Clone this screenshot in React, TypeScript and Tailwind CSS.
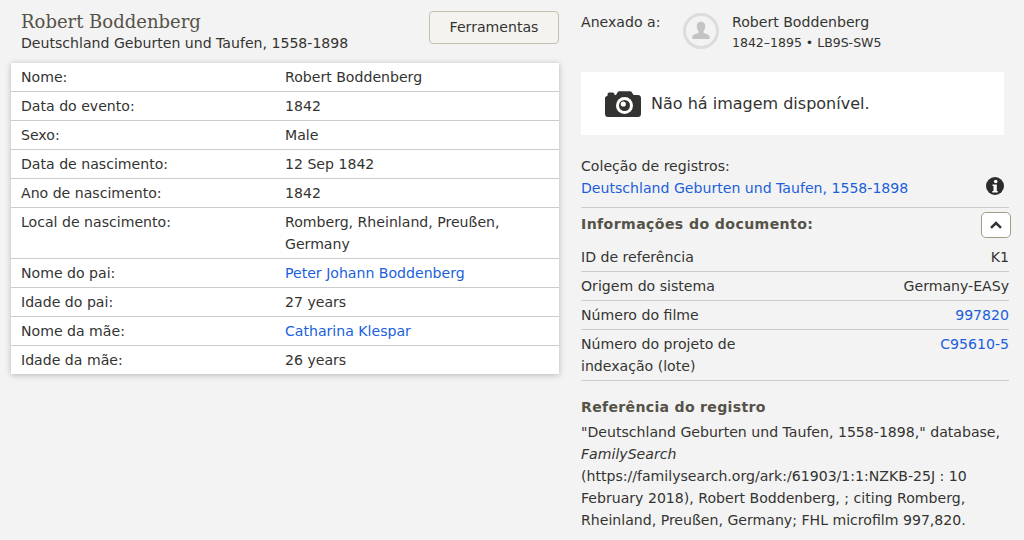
import React from "react";

const rows: [string, string, boolean?][] = [
  ["Nome:", "Robert Boddenberg"],
  ["Data do evento:", "1842"],
  ["Sexo:", "Male"],
  ["Data de nascimento:", "12 Sep 1842"],
  ["Ano de nascimento:", "1842"],
  ["Local de nascimento:", "Romberg, Rheinland, Preußen, Germany"],
  ["Nome do pai:", "Peter Johann Boddenberg", true],
  ["Idade do pai:", "27 years"],
  ["Nome da mãe:", "Catharina Klespar", true],
  ["Idade da mãe:", "26 years"],
];

const docs: [string, string, boolean?][] = [
  ["ID de referência", "K1"],
  ["Origem do sistema", "Germany-EASy"],
  ["Número do filme", "997820", true],
  ["Número do projeto de indexação (lote)", "C95610-5", true],
];

export default function App() {
  return (
    <div className="h-[540px] w-[1024px] overflow-hidden bg-[#f3f3f3] font-['DejaVu_Sans',sans-serif] text-[14.1px] leading-[22px] text-[#333331] flex">
      <div className="w-[548px] ml-[11px] shrink-0">
        <div className="flex justify-between items-start pt-[11px] pl-[10px] h-[63px]">
          <div>
            <div className="font-['DejaVu_Serif',serif] text-[18px] leading-[22px] text-[#555248]">Robert Boddenberg</div>
            <div className="leading-[20px]">Deutschland Geburten und Taufen, 1558-1898</div>
          </div>
          <button className="w-[130px] h-[33px] pb-[2px] rounded-[4px] border border-[#c4bfae] bg-[#f4f3ef] text-[#333331]">Ferramentas</button>
        </div>
        <div className="bg-white shadow-[0_1px_6px_rgba(0,0,0,0.25)]">
          {rows.map(([k, v, link]) => (
            <div key={k} className="flex border-b border-[#cccccc] last:border-b-0 pl-[10px] pt-[3px] pb-[3px]">
              <div className="w-[264px] shrink-0">{k}</div>
              <div className={`w-[235px] ${link ? "text-[#1a5fdc]" : ""}`}>{v}</div>
            </div>
          ))}
        </div>
      </div>
      <div className="w-[428px] ml-[22px] shrink-0">
        <div className="flex pt-[11px] h-[72px]">
          <div className="w-[102px]">Anexado a:</div>
          <svg viewBox="0 0 36 36" className="w-[36px] h-[36px] mt-[2px]">
            <circle cx="18" cy="18" r="16.500" fill="#f3f3f3" stroke="#dcdcdc" strokeWidth="3" />
            <path d="M18 8.700c-2.800 0-4.300 2.100-4.300 4.700 0 1.900.7 3.400 1.800 4.500v1.800c-1.500.9-6.200 1.500-6.200 4.200V26h17.400v-2.100c0-2.700-4.700-3.300-6.200-4.200v-1.800c1.100-1.100 1.800-2.600 1.800-4.500 0-2.600-1.500-4.700-4.300-4.700z" fill="#c4c4c4" />
          </svg>
          <div className="ml-[13px]">
            <div>Robert Boddenberg</div>
            <div className="text-[12.5px] leading-[20px]">1842–1895 • LB9S-SW5</div>
          </div>
        </div>
        <div className="w-[423px] h-[63px] bg-white flex items-center pl-[24px]">
          <svg viewBox="0 0 36 26" className="w-[36px] h-[26px]">
            <path d="M2.500 5V3.500C2.500 2.400 3.400 1.500 4.500 1.500h3c1.100 0 2 .9 2 2V4h1.500l1.500-2.500C13 .7 13.700.2 14.500.2h10.500c.9 0 1.500.4 2 1.200L28.500 4H33c1.700 0 3 1.300 3 3v16c0 1.700-1.300 3-3 3H3c-1.700 0-3-1.300-3-3V7c0-1 .8-1.700 2.500-2z" fill="#333331" />
            <circle cx="19.500" cy="14.500" r="8.500" fill="#fff" />
            <circle cx="19.500" cy="14.500" r="5.500" fill="#333331" />
            <circle cx="18.300" cy="13" r="2.600" fill="#fff" />
          </svg>
          <span className="ml-[10px] text-[16px]">Não há imagem disponível.</span>
        </div>
        <div className="mt-[20px] flex justify-between border-b border-[#cccccc] pb-[8px]">
          <div>
            <div>Coleção de registros:</div>
            <div className="text-[#1a5fdc]">Deutschland Geburten und Taufen, 1558-1898</div>
          </div>
          <svg viewBox="0 0 18 18" className="w-[18px] h-[18px] mt-[22px] mr-[5px]">
            <circle cx="9" cy="9" r="9" fill="#2b2b2b" />
            <circle cx="9.700" cy="4.500" r="1.800" fill="#fff" />
            <path d="M6.500 7.600h4.300v6.400h1V15.500H6.300V14h1.200V9.100h-1z" fill="#fff" />
          </svg>
        </div>
        <div className="flex justify-between items-start h-[35px]">
          <div className="mt-[5px] font-bold text-[#555248] tracking-[0.4px]">Informações do documento:</div>
          <div className="mt-[4px] w-[30px] h-[26px] rounded-[5px] border border-[#a39c85] bg-white flex items-center justify-center -mr-[2px]">
            <svg viewBox="0 0 12 8" className="w-[12px] h-[8px]">
              <path d="M1 6.800 6 2l5 4.800" fill="none" stroke="#333331" strokeWidth="2.500" />
            </svg>
          </div>
        </div>
        {docs.map(([k, v, link]) => (
          <div key={k} className="flex justify-between border-b border-[#cccccc] pt-[3px] pb-[3px]">
            <div className="w-[200px]">{k}</div>
            <div className={link ? "text-[#1a5fdc]" : ""}>{v}</div>
          </div>
        ))}
        <div className="mt-[15px] font-bold text-[#555248] tracking-[0.3px]">Referência do registro</div>
        <div className="mt-[3px]">
          "Deutschland Geburten und Taufen, 1558-1898," database, <i>FamilySearch</i> (https://familysearch.org/ark:/61903/1:1:NZKB-25J : 10 February 2018), Robert Boddenberg, ; citing Romberg, Rheinland, Preußen, Germany; FHL microfilm 997,820.
        </div>
      </div>
    </div>
  );
}
